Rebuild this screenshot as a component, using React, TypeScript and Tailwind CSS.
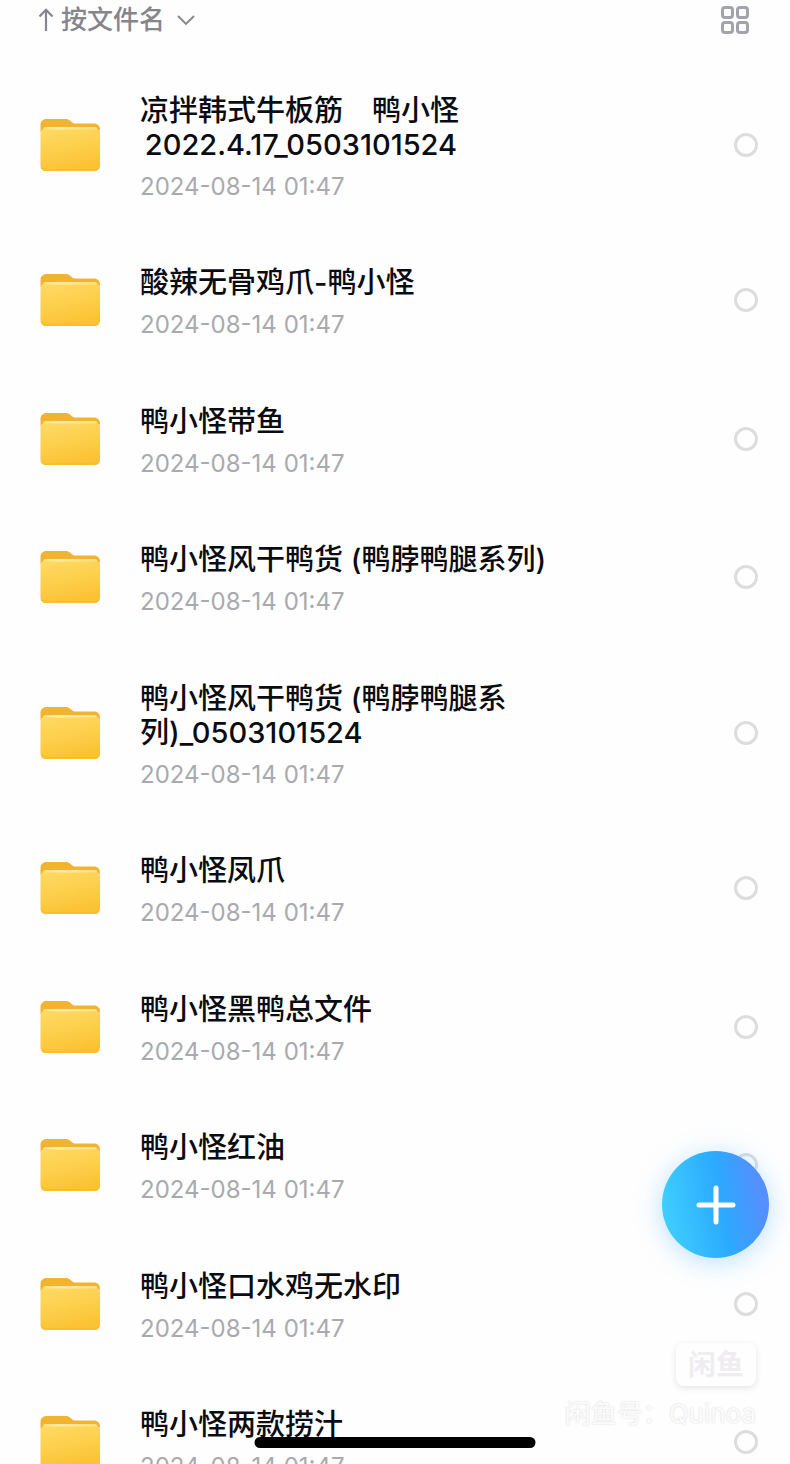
import { useState } from 'react';

interface FileItem {
  id: number;
  name: string;
  date: string;
}

const files: FileItem[] = [
  { id: 1, name: '凉拌韩式牛板筋　鸭小怪\n\u20062022.4.17_0503101524', date: '2024-08-14 01:47' },
  { id: 2, name: '酸辣无骨鸡爪-鸭小怪', date: '2024-08-14 01:47' },
  { id: 3, name: '鸭小怪带鱼', date: '2024-08-14 01:47' },
  { id: 4, name: '鸭小怪风干鸭货 (鸭脖鸭腿系列)', date: '2024-08-14 01:47' },
  { id: 5, name: '鸭小怪风干鸭货 (鸭脖鸭腿系列)_0503101524', date: '2024-08-14 01:47' },
  { id: 6, name: '鸭小怪凤爪', date: '2024-08-14 01:47' },
  { id: 7, name: '鸭小怪黑鸭总文件', date: '2024-08-14 01:47' },
  { id: 8, name: '鸭小怪红油', date: '2024-08-14 01:47' },
  { id: 9, name: '鸭小怪口水鸡无水印', date: '2024-08-14 01:47' },
  { id: 10, name: '鸭小怪两款捞汁', date: '2024-08-14 01:47' },
];

function FolderIcon() {
  return (
    <svg width="60" height="54" viewBox="0 0 60 54" className="shrink-0" aria-hidden="true">
      <defs>
        <linearGradient id="folder-front" x1="0" y1="0" x2="0.3" y2="1">
          <stop offset="0" stopColor="#ffda62" />
          <stop offset="0.5" stopColor="#fdd04d" />
          <stop offset="1" stopColor="#fbc334" />
        </linearGradient>
        <linearGradient id="folder-lip" x1="0" y1="0" x2="1" y2="0">
          <stop offset="0" stopColor="#ffe07a" />
          <stop offset="0.3" stopColor="#ffeba6" />
          <stop offset="1" stopColor="#ffdf80" />
        </linearGradient>
      </defs>
      <path
        d="M0.500 14V7C0.500 3.500 3 1 6.500 1H25C27 1 28.500 1.400 30 2.600L32 4.200C33 5 34 5.500 35.500 5.500H54C57.500 5.500 60 8 60 11.500L59 14H1Z"
        fill="#f2b331"
      />
      <path d="M3 16V11.500C3 10 4 9 5.500 9H55C56.500 9 57.500 10 57.500 11.500V16Z" fill="url(#folder-lip)" />
      <path d="M0.500 15C0.500 12.500 1.700 11.500 4 11.500H56C58.300 11.500 60 12.500 60 15V47.500C60 51 58 53 54.500 53H6C2.500 53 0.500 51 0.500 47.500Z" fill="url(#folder-front)" />
      <path d="M2 49.500C2.900 51.400 4 52 6 52H54C56.200 52 57.600 51.400 58.500 49.500" fill="none" stroke="#f8bd31" strokeWidth="1.500" />
    </svg>
  );
}

function SortHeader() {
  return (
    <header className="mb-[18px] flex h-10 shrink-0 items-center justify-between pl-[38px] pr-[41px]">
      <button type="button" className="flex items-center text-[26px] font-medium leading-10 text-[#85868b]">
        <svg width="16" height="24" viewBox="0 0 16 24" className="mr-[7px]" fill="none" stroke="currentColor" strokeWidth="2.200" aria-hidden="true">
          <path d="M8 23V2M1.500 8.500L8 1.800L14.500 8.500" />
        </svg>
        按文件名
        <svg width="18" height="12" viewBox="0 0 18 12" className="ml-3" fill="none" stroke="currentColor" strokeWidth="1.800" aria-hidden="true">
          <path d="M1 2L9 10L17 2" />
        </svg>
      </button>
      <button type="button" aria-label="网格视图">
        <svg width="28" height="28" viewBox="0 0 28 28" fill="none" stroke="#a1a3ad" strokeWidth="3" aria-hidden="true">
          <rect x="1.500" y="1.500" width="10" height="10" rx="2.500" />
          <rect x="16.500" y="1.500" width="10" height="10" rx="2.500" />
          <rect x="1.500" y="16.500" width="10" height="10" rx="2.500" />
          <rect x="16.500" y="16.500" width="10" height="10" rx="2.500" />
        </svg>
      </button>
    </header>
  );
}

interface FileRowProps {
  file: FileItem;
  checked: boolean;
  onToggle: () => void;
}

function FileRow({ file, checked, onToggle }: FileRowProps) {
  const inputId = `file-${file.id}`;

  return (
    <li className="flex items-center pt-[34px] pb-[33px] pl-10 pr-8 even:pb-[34px]">
      <FolderIcon />
      <label htmlFor={inputId} className="ml-10 mr-10 min-w-0 flex-1 pt-0.5">
        <span className="block whitespace-pre-wrap text-[29px] font-medium leading-[34px] text-[#0b0c12]">
          {file.name}
        </span>
        <time className="mt-[15px] block text-[24px] leading-5 text-[#a9aaae]">{file.date}</time>
      </label>
      <input
        id={inputId}
        type="checkbox"
        checked={checked}
        onChange={onToggle}
        className="size-6 shrink-0 appearance-none rounded-full border-[3px] border-[#dddde0] checked:border-[#2ba5ff] checked:bg-[#2ba5ff]"
      />
    </li>
  );
}

function Watermark() {
  return (
    <div className="pointer-events-none absolute right-[34px] bottom-[34px] flex flex-col items-end">
      <div className="flex h-[43px] w-20 items-center justify-center rounded-lg bg-[#fefefe] text-[28px] font-bold text-[#efedef] shadow-[0_2px_6px_rgba(0,0,0,0.1)]">
        闲鱼
      </div>
      <p className="mt-3 text-[26px] leading-8 text-[#fbfbfb] [text-shadow:0_0_2px_#d4d2d4]">闲鱼号：Quinoa</p>
    </div>
  );
}

export default function App() {
  const [selected, setSelected] = useState<number[]>([]);

  const toggle = (id: number) => {
    setSelected((prev) => (prev.includes(id) ? prev.filter((x) => x !== id) : [...prev, id]));
  };

  return (
    <div
      lang="zh-CN"
      className="relative flex h-screen flex-col overflow-hidden bg-[#fefefe] font-['Inter','Noto_Sans_CJK_SC',sans-serif]"
    >
      <SortHeader />

      <main className="min-h-0 flex-1 overflow-y-auto [scrollbar-width:none]">
        <ul>
          {files.map((file) => (
            <FileRow
              key={file.id}
              file={file}
              checked={selected.includes(file.id)}
              onToggle={() => toggle(file.id)}
            />
          ))}
        </ul>
      </main>

      <Watermark />

      <button
        type="button"
        aria-label="新建"
        className="absolute right-[21px] bottom-[206px] flex size-[107px] items-center justify-center rounded-full bg-[linear-gradient(80deg,#3fd0ff_5%,#2baaff_55%,#558fff_88%)] shadow-[0_4px_26px_rgba(60,170,255,0.35)]"
      >
        <svg width="40" height="40" viewBox="0 0 40 40" stroke="#fff" strokeWidth="5" strokeLinecap="round" aria-hidden="true">
          <path d="M20 3V37M3 20H37" />
        </svg>
      </button>

      <div className="absolute bottom-4 left-1/2 h-[11px] w-[281px] -translate-x-1/2 rounded-full bg-black" />
    </div>
  );
}
